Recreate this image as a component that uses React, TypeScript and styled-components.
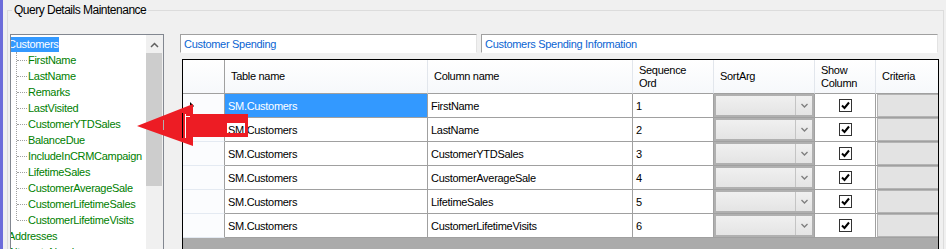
import React from 'react'
import styled, { createGlobalStyle } from 'styled-components'

const GlobalStyle = createGlobalStyle`
  html, body {
    margin: 0;
    padding: 0;
    background: #f0f0f0;
    overflow: hidden;
  }
  body {
    font-family: "Liberation Sans", Arial, sans-serif;
  }
`

const Page = styled.div`
  position: relative;
  display: flex;
  width: 946px;
  height: 249px;
  overflow: hidden;
  background: #f0f0f0;
`

const Strip = styled.div`
  width: 3px;
  flex-shrink: 0;
  background: #6c6cda;
`

const GroupBox = styled.fieldset`
  align-self: flex-start;
  flex: 1;
  min-width: 0;
  height: 300px;
  margin: 3px 2px 0 4px;
  padding: 0 0 0 2px;
  border: 1px solid #dcdcdc;
`

const Legend = styled.legend`
  margin-left: 2px;
  padding: 0 2px;
  font-size: 12px;
  line-height: 14px;
  letter-spacing: -0.5px;
  color: #000;
`

const Body = styled.div`
  display: flex;
  align-items: flex-start;
  margin-top: 17px;
`

/* ---- tree view ---- */

const TreeBox = styled.div`
  display: flex;
  width: 154px;
  height: 240px;
  box-sizing: border-box;
  border: 1px solid #828790;
  background: #fff;
`

const TreeItems = styled.div`
  flex: 1;
  overflow: hidden;
  padding-top: 1px;
  font-size: 11px;
  letter-spacing: -0.3px;
  white-space: nowrap;
`

const RootItem = styled.div`
  height: 16px;
  display: flex;
  align-items: center;
`

const RootLabel = styled.span<{ $selected?: boolean }>`
  margin-left: -4px;
  padding: 1px;
  line-height: 13px;
  color: ${p => (p.$selected ? '#fff' : '#008000')};
  background: ${p => (p.$selected ? '#3399ff' : 'transparent')};
`

const Children = styled.div`
  position: relative;
  margin-left: 5px;

  &::before {
    content: '';
    position: absolute;
    left: 0;
    top: 0;
    bottom: 8px;
    border-left: 1px dotted #a0a0a0;
  }
`

const ChildItem = styled.div`
  height: 16px;
  display: flex;
  align-items: center;
  color: #008000;
`

const Branch = styled.span`
  width: 10px;
  margin: 0 1px;
  border-top: 1px dotted #a0a0a0;
`

const ScrollBar = styled.div`
  width: 17px;
  flex-shrink: 0;
  display: flex;
  flex-direction: column;
  background: #f0f0f0;
`

const ScrollButton = styled.div`
  height: 18px;
  display: flex;
  align-items: center;
  justify-content: center;
  padding-top: 2px;
  box-sizing: border-box;
`

const Thumb = styled.div`
  height: 133px;
  margin-right: 1px;
  background: #cdcdcd;
`

/* ---- right side ---- */

const RightPane = styled.div`
  width: 759px;
  margin-left: 16px;
  display: flex;
  flex-direction: column;
`

const InputRow = styled.div`
  display: flex;
  gap: 4px;
`

const TextBox = styled.input<{ $w: number }>`
  width: ${p => p.$w}px;
  height: 19px;
  box-sizing: border-box;
  margin: 0;
  padding: 0 3px;
  border: 1px solid;
  border-color: #a0a0a0 #e3e3e3 #ffffff #a0a0a0;
  background: #fff;
  font-family: "Liberation Sans", Arial, sans-serif;
  font-size: 11px;
  letter-spacing: -0.3px;
  color: #0a64d2;
  outline: none;
`

const GridFrame = styled.div`
  width: 757px;
  height: 200px;
  margin: 6px 0 0 2px;
  box-sizing: border-box;
  border: 1px solid #000;
  background: #ababab;
  overflow: hidden;
  font-size: 11px;
  letter-spacing: -0.3px;
  color: #000;
`

const GridRow = styled.div`
  display: flex;
  width: max-content;
`

const CornerCell = styled.div`
  width: 42px;
  height: 34px;
  flex-shrink: 0;
  box-sizing: border-box;
  border-right: 1px solid #a0a0a0;
  border-bottom: 1px solid #a0a0a0;
  background: linear-gradient(#ffffff, #f6f8fb);
`

const HeaderCell = styled.div<{ $w: number }>`
  width: ${p => p.$w}px;
  height: 34px;
  flex-shrink: 0;
  box-sizing: border-box;
  display: flex;
  flex-direction: column;
  justify-content: center;
  padding-left: 6px;
  line-height: 13px;
  border-right: 1px solid #e2e6ec;
  border-bottom: 1px solid #a0a0a0;
  background: linear-gradient(#ffffff, #f6f8fb);
`

const RowHeader = styled.div`
  width: 42px;
  height: 24px;
  flex-shrink: 0;
  box-sizing: border-box;
  display: flex;
  align-items: center;
  border-right: 1px solid #a0a0a0;
  border-bottom: 1px solid #e4eaf2;
  background: #fbfcfe;
`

const RowIndicator = styled.span`
  margin-left: 7px;
  width: 0;
  height: 0;
  border-left: 4px solid #000;
  border-top: 4px solid transparent;
  border-bottom: 4px solid transparent;
`

const Cell = styled.div<{ $w: number; $selected?: boolean; $center?: boolean; $flush?: boolean }>`
  width: ${p => p.$w}px;
  height: 24px;
  flex-shrink: 0;
  box-sizing: border-box;
  display: flex;
  align-items: center;
  justify-content: ${p => (p.$center ? 'center' : 'flex-start')};
  padding-left: ${p => (p.$center || p.$flush ? 0 : 3)}px;
  border-right: 1px solid #a0a0a0;
  border-bottom: 1px solid #a0a0a0;
  background: ${p => (p.$selected ? '#3399ff' : '#fff')};
  color: ${p => (p.$selected ? '#fff' : '#000')};
  white-space: nowrap;
`

const Combo = styled.div`
  flex: 1;
  align-self: stretch;
  display: flex;
  justify-content: flex-end;
  box-sizing: border-box;
  border: 2px solid #b0b0b0;
  background: linear-gradient(#f0f0f0, #e4e4e4);
`

const ComboButton = styled.div`
  width: 16px;
  display: flex;
  align-items: center;
  justify-content: center;
  border-left: 1px solid #c4c4c4;
`

const CheckBox = styled.span`
  width: 13px;
  height: 13px;
  box-sizing: border-box;
  border: 1px solid #333;
  background: #fff;
  display: flex;
  align-items: center;
  justify-content: center;
`

const CellButton = styled.div`
  flex: 1;
  align-self: stretch;
  margin-left: 1px;
  box-sizing: border-box;
  border: 1px solid #b4b4b4;
  background: #e3e3e3;
`

const Arrow = styled.svg`
  position: absolute;
  left: 0;
  top: 0;
  pointer-events: none;
`

const treeFields = [
  'FirstName',
  'LastName',
  'Remarks',
  'LastVisited',
  'CustomerYTDSales',
  'BalanceDue',
  'IncludeInCRMCampaign',
  'LifetimeSales',
  'CustomerAverageSale',
  'CustomerLifetimeSales',
  'CustomerLifetimeVisits',
]

const columns = [
  { title: ['Table name'], w: 203 },
  { title: ['Column name'], w: 205 },
  { title: ['Sequence', 'Ord'], w: 81 },
  { title: ['SortArg'], w: 101 },
  { title: ['Show', 'Column'], w: 61 },
  { title: ['Criteria'], w: 100 },
]

const rows = [
  'FirstName',
  'LastName',
  'CustomerYTDSales',
  'CustomerAverageSale',
  'LifetimeSales',
  'CustomerLifetimeVisits',
]

const ChevronUp = () => (
  <svg width="9" height="6" viewBox="0 0 9 6">
    <polyline points="1,5 4.5,1.5 8,5" fill="none" stroke="#606060" strokeWidth="1.5" />
  </svg>
)

const ChevronDown = () => (
  <svg width="7" height="5" viewBox="0 0 7 5">
    <polyline points="0.5,1 3.5,4 6.5,1" fill="none" stroke="#808080" strokeWidth="1.4" />
  </svg>
)

const Check = () => (
  <svg width="11" height="11" viewBox="0 0 11 11">
    <polyline points="2,5.5 4.5,8 9,2.5" fill="none" stroke="#000" strokeWidth="2" />
  </svg>
)

const TreeView = () => (
  <TreeBox>
    <TreeItems>
      <RootItem>
        <RootLabel $selected>Customers</RootLabel>
      </RootItem>
      <Children>
        {treeFields.map(f => (
          <ChildItem key={f}>
            <Branch />
            {f}
          </ChildItem>
        ))}
      </Children>
      <RootItem>
        <RootLabel>Addresses</RootLabel>
      </RootItem>
      <RootItem>
        <RootLabel>AlternateNumbers</RootLabel>
      </RootItem>
    </TreeItems>
    <ScrollBar>
      <ScrollButton>
        <ChevronUp />
      </ScrollButton>
      <Thumb />
    </ScrollBar>
  </TreeBox>
)

const QueryGrid = () => (
  <GridFrame>
    <GridRow>
      <CornerCell />
      {columns.map(c => (
        <HeaderCell key={c.title[0]} $w={c.w}>
          {c.title.map(t => (
            <div key={t}>{t}</div>
          ))}
        </HeaderCell>
      ))}
    </GridRow>
    {rows.map((name, i) => (
      <GridRow key={name}>
        <RowHeader>{i === 0 && <RowIndicator />}</RowHeader>
        <Cell $w={203} $selected={i === 0}>SM.Customers</Cell>
        <Cell $w={205}>{name}</Cell>
        <Cell $w={81}>{i + 1}</Cell>
        <Cell $w={101} $flush>
          <Combo>
            <ComboButton>
              <ChevronDown />
            </ComboButton>
          </Combo>
        </Cell>
        <Cell $w={61} $center>
          <CheckBox>
            <Check />
          </CheckBox>
        </Cell>
        <Cell $w={100} $flush>
          <CellButton />
        </Cell>
      </GridRow>
    ))}
  </GridFrame>
)

export default function App() {
  return (
    <>
      <GlobalStyle />
      <Page>
        <Strip />
        <GroupBox>
          <Legend>Query Details Maintenance</Legend>
          <Body>
            <TreeView />
            <RightPane>
              <InputRow>
                <TextBox $w={297} readOnly defaultValue="Customer Spending" />
                <TextBox $w={457} readOnly defaultValue="Customers Spending Information" />
              </InputRow>
              <QueryGrid />
            </RightPane>
          </Body>
        </GroupBox>
        <Arrow width="946" height="249" viewBox="0 0 946 249">
          <path
            fillRule="evenodd"
            fill="#ed1c24"
            d="M137 126 L193 104 L193 114 L248 114 L248 137 L193 137 L193 146 Z M227 123 L245 123 L245 133 L227 133 Z"
          />
          <rect x="182" y="113" width="1" height="25" fill="#000" />
          <rect x="185" y="114" width="1" height="24" fill="#fff" />
          <rect x="185" y="116" width="5" height="1" fill="#fff" />
          <rect x="163" y="120" width="1" height="10" fill="#b0b0b0" />
        </Arrow>
      </Page>
    </>
  )
}
